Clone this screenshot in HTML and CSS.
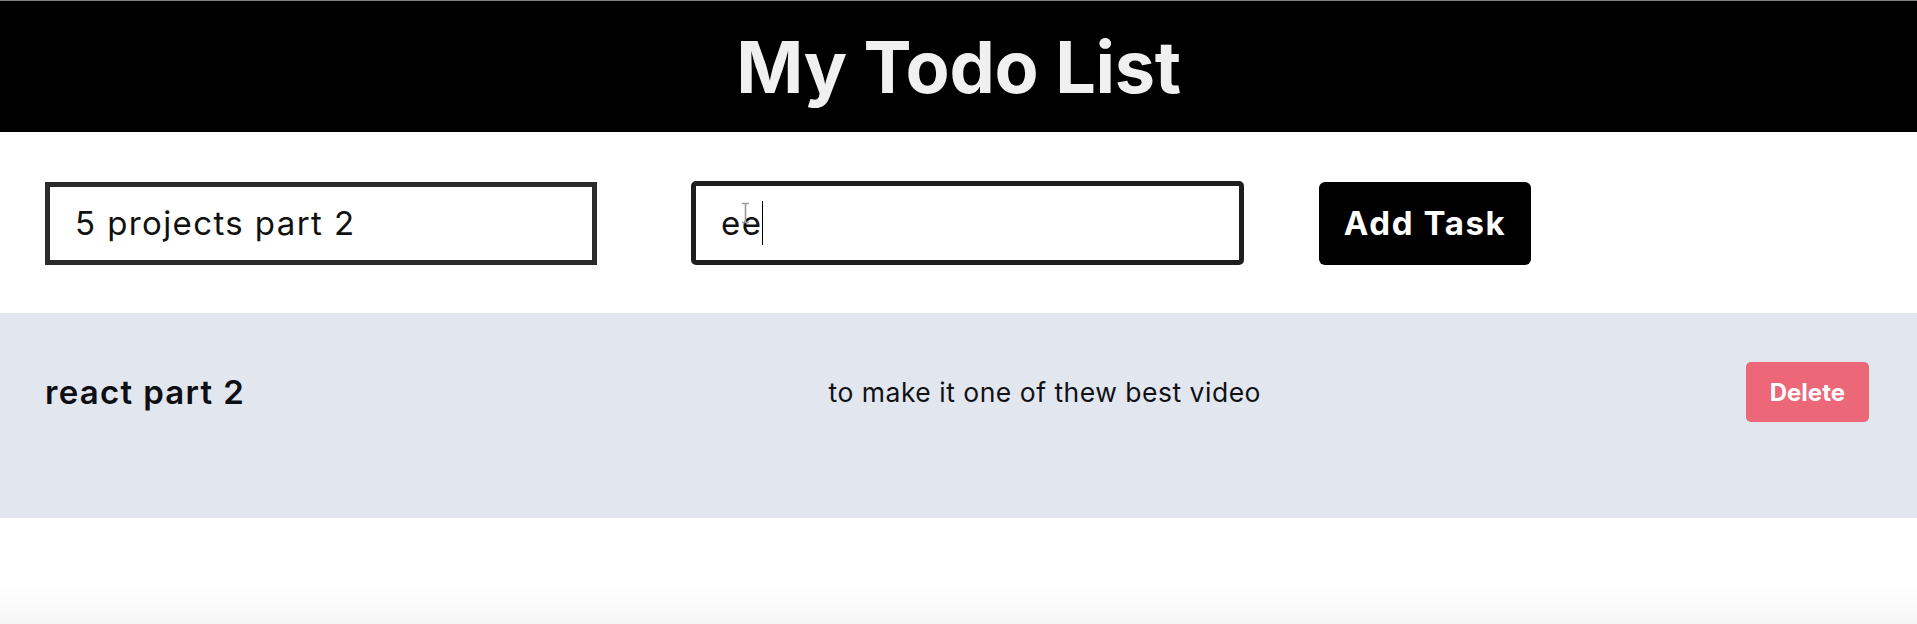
FILE: index.html
```html
<!DOCTYPE html>
<html lang="en">
<head>
<meta charset="utf-8">
<title>My Todo List</title>
<link rel="stylesheet" href="styles.css">
</head>
<body>
<header class="app-header">
  <h1 class="app-title">My Todo List</h1>
</header>
<main>
  <form class="task-form" onsubmit="return false">
    <input class="field field-title" type="text" value="5 projects part 2">
    <div class="field-wrap">
      <input class="field field-desc" type="text" value="ee">
      <span class="caret"></span>
      <svg class="ibeam" viewBox="0 0 9 22" width="9" height="22" aria-hidden="true">
        <path d="M1 1.5h7M1 20.5h7M4.5 1.5v19" stroke="#9a9a9a" stroke-width="1.6" fill="none"/>
      </svg>
    </div>
    <button class="add-btn" type="button">Add Task</button>
  </form>
  <ul class="task-list">
    <li class="task-item">
      <h2 class="task-title">react part 2</h2>
      <p class="task-desc">to make it one of thew best video</p>
      <div class="task-actions">
        <button class="delete-btn" type="button">Delete</button>
      </div>
    </li>
  </ul>
</main>
</body>
</html>
```
FILE: styles.css
```css
html, body {
  margin: 0;
  padding: 0;
}
body {
  font-family: Inter, "Noto Sans", sans-serif;
  color: #111;
  min-height: 624px;
  background: linear-gradient(to bottom, #ffffff 0, #ffffff 585px, #f6f6f6 624px);
}
.app-header {
  background: #000;
  border-top: 1px solid #7f7f7f;
  padding: 30px 0 29px;
  text-align: center;
}
.app-title {
  margin: 0;
  font-size: 72px;
  line-height: 1;
  font-weight: 700;
  letter-spacing: -0.3px;
  color: #f0f0f0;
}
.task-form {
  display: flex;
  align-items: center;
  padding: 49px 45px 48px;
}
.field {
  box-sizing: border-box;
  width: 552px;
  height: 83px;
  border: 5px solid #2b2b2b;
  border-radius: 0;
  padding: 0 25px;
  font-family: Inter, sans-serif;
  font-size: 33px;
  letter-spacing: 1.4px;
  color: #111;
  background: #fff;
  outline: none;
}
.field-wrap {
  position: relative;
  margin-left: 94px;
}
.field-desc {
  width: 553px;
  height: 84px;
  border-color: #1e1e1e;
  border-radius: 5px;
}
.caret {
  position: absolute;
  left: 71px;
  top: 20px;
  width: 1px;
  height: 44px;
  background: #000;
}
.ibeam {
  position: absolute;
  left: 50px;
  top: 21px;
}
.add-btn {
  box-sizing: border-box;
  margin-left: 75px;
  width: 212px;
  height: 83px;
  border: 0;
  border-radius: 6px;
  background: #000;
  color: #fff;
  font-family: Inter, sans-serif;
  font-size: 33px;
  font-weight: 700;
  letter-spacing: 1.6px;
  cursor: pointer;
}
.task-list {
  list-style: none;
  margin: 0;
  padding: 0;
}
.task-item {
  display: grid;
  grid-template-columns: repeat(3, 1fr);
  align-items: center;
  background: #e2e6ef;
  padding: 49px 48px 96px 45px;
}
.task-title {
  margin: 0;
  font-size: 33px;
  font-weight: 600;
  letter-spacing: 1.3px;
  color: #0d0f14;
}
.task-desc {
  margin: 0;
  text-align: right;
  font-size: 26.5px;
  letter-spacing: 0.5px;
  color: #101216;
}
.task-actions {
  display: flex;
  justify-content: flex-end;
}
.delete-btn {
  box-sizing: border-box;
  height: 60px;
  padding: 0 24px;
  border: 0;
  border-radius: 5px;
  background: #ec6878;
  color: #fff;
  font-family: Inter, sans-serif;
  font-size: 24px;
  font-weight: 700;
  cursor: pointer;
}
```
